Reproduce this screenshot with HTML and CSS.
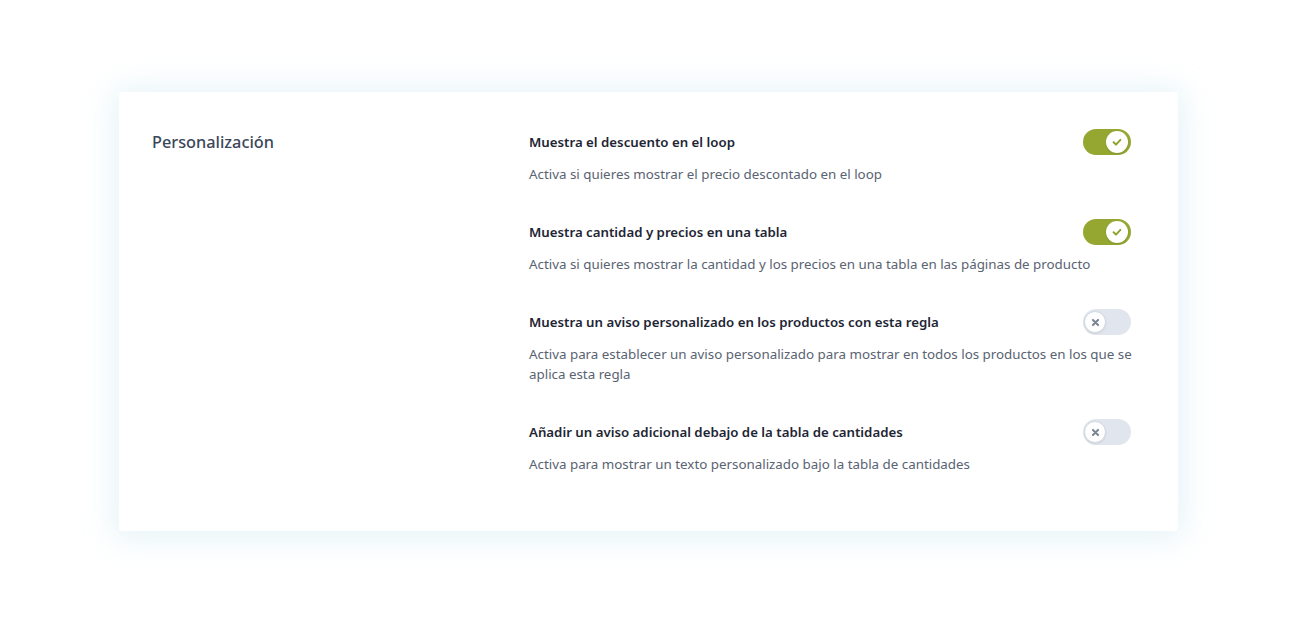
FILE: index.html
```html
<!DOCTYPE html>
<html lang="es">
<head>
<meta charset="utf-8">
<title>Personalización</title>
<link rel="stylesheet" href="styles.css">
</head>
<body>
<div class="page">
  <section class="card">
    <div class="side">
      <h2 class="heading">Personalización</h2>
    </div>
    <div class="options">
      <div class="option">
        <div class="option-head">
          <span class="option-title">Muestra el descuento en el loop</span>
          <span class="toggle on"><span class="knob"><svg viewBox="0 0 12 12" width="12" height="12"><path d="M2.6 6.3 L5 8.6 L9.4 3.9" fill="none" stroke="#8fa22c" stroke-width="2" stroke-linecap="round" stroke-linejoin="round"/></svg></span></span>
        </div>
        <p class="option-desc">Activa si quieres mostrar el precio descontado en el loop</p>
      </div>
      <div class="option">
        <div class="option-head">
          <span class="option-title">Muestra cantidad y precios en una tabla</span>
          <span class="toggle on"><span class="knob"><svg viewBox="0 0 12 12" width="12" height="12"><path d="M2.6 6.3 L5 8.6 L9.4 3.9" fill="none" stroke="#8fa22c" stroke-width="2" stroke-linecap="round" stroke-linejoin="round"/></svg></span></span>
        </div>
        <p class="option-desc">Activa si quieres mostrar la cantidad y los precios en una tabla en las páginas de producto</p>
      </div>
      <div class="option">
        <div class="option-head">
          <span class="option-title">Muestra un aviso personalizado en los productos con esta regla</span>
          <span class="toggle off"><span class="knob"><svg viewBox="0 0 12 12" width="11" height="11"><path d="M3.2 3.2 L8.8 8.8 M8.8 3.2 L3.2 8.8" fill="none" stroke="#7b8494" stroke-width="2.2" stroke-linecap="round"/></svg></span></span>
        </div>
        <p class="option-desc">Activa para establecer un aviso personalizado para mostrar en todos los productos en los que se aplica esta regla</p>
      </div>
      <div class="option">
        <div class="option-head">
          <span class="option-title">Añadir un aviso adicional debajo de la tabla de cantidades</span>
          <span class="toggle off"><span class="knob"><svg viewBox="0 0 12 12" width="11" height="11"><path d="M3.2 3.2 L8.8 8.8 M8.8 3.2 L3.2 8.8" fill="none" stroke="#7b8494" stroke-width="2.2" stroke-linecap="round"/></svg></span></span>
        </div>
        <p class="option-desc">Activa para mostrar un texto personalizado bajo la tabla de cantidades</p>
      </div>
    </div>
  </section>
</div>
</body>
</html>
```

FILE: styles.css
```css
* { box-sizing: border-box; }
html, body { margin: 0; padding: 0; background: #ffffff; }
body {
  font-family: "Noto Sans", "Open Sans", "Liberation Sans", sans-serif;
  width: 1300px;
  height: 643px;
  overflow: hidden;
}
.page {
  padding: 92px 122px 0 119px;
}
.card {
  width: 1059px;
  height: 439px;
  background: #ffffff;
  border-radius: 3px;
  box-shadow: 0 2px 30px 6px rgba(170, 215, 230, 0.28);
  display: flex;
  padding: 40px 47px 0 33px;
}
.side {
  width: 377px;
  flex: none;
}
.heading {
  margin: 0;
  font-size: 16.3px;
  font-weight: 500;
  line-height: 20px;
  color: #3b4758;
}
.options {
  flex: 1;
  display: flex;
  flex-direction: column;
  gap: 38px;
}
.option-head {
  display: flex;
  justify-content: space-between;
  align-items: center;
  height: 20px;
}
.option-title {
  font-size: 13.25px;
  font-weight: 600;
  line-height: 20px;
  color: #1e2533;
}
.option-desc {
  margin: 12px -6px 0 0;
  font-size: 13.35px;
  line-height: 20px;
  color: #596372;
}
.toggle {
  width: 48px;
  height: 26px;
  border-radius: 13px;
  display: flex;
  align-items: center;
  flex: none;
}
.toggle.on {
  background: #95a731;
  justify-content: flex-end;
  padding: 2px 3px;
}
.toggle.off {
  background: #e1e6ee;
  justify-content: flex-start;
  padding: 2px 1px;
}
.knob {
  width: 22px;
  height: 22px;
  border-radius: 50%;
  background: #ffffff;
  display: flex;
  align-items: center;
  justify-content: center;
}
.toggle.on .knob {
  box-shadow: 0 1px 2px rgba(0, 0, 0, 0.12);
}
.toggle.off .knob {
  border: 1px solid #d3d9e2;
  box-shadow: 0 1px 2px rgba(0, 0, 0, 0.08);
}
```
